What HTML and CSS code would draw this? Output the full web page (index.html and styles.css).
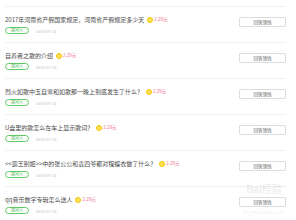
FILE: index.html
```html
<!DOCTYPE html>
<html lang="zh">
<head>
<meta charset="utf-8">
<link rel="stylesheet" href="styles.css">
</head>
<body>
<div class="list">
  <div class="item">
    <div class="main">
      <div class="title">2017年河南省产假国家规定，河南省产假规定多少天<span class="coin"></span><span class="price">2.29元</span></div>
      <div class="meta"><span class="tag">提问人</span><span class="date">2018-07-18</span></div>
    </div>
    <button class="btn">回答领钱</button>
  </div>
  <div class="item">
    <div class="main">
      <div class="title">自养者之歌的介绍<span class="coin"></span><span class="price">2.29元</span></div>
      <div class="meta"><span class="tag">提问人</span><span class="date">2018-07-18</span></div>
    </div>
    <button class="btn">回答领钱</button>
  </div>
  <div class="item">
    <div class="main">
      <div class="title">烈火如歌中玉自寒和如歌那一晚上到底发生了什么？<span class="coin"></span><span class="price">2.29元</span></div>
      <div class="meta"><span class="tag">提问人</span><span class="date">2018-07-18</span></div>
    </div>
    <button class="btn">回答领钱</button>
  </div>
  <div class="item">
    <div class="main">
      <div class="title">U盘里的歌怎么在车上显示歌词？<span class="coin"></span><span class="price">2.29元</span></div>
      <div class="meta"><span class="tag">提问人</span><span class="date">2018-07-18</span></div>
    </div>
    <button class="btn">回答领钱</button>
  </div>
  <div class="item">
    <div class="main">
      <div class="title">&lt;&lt;霸王别姬&gt;&gt;中的张公公和袁四爷都对程蝶衣做了什么？<span class="coin"></span><span class="price">2.29元</span></div>
      <div class="meta"><span class="tag">提问人</span><span class="date">2018-07-18</span></div>
    </div>
    <button class="btn">回答领钱</button>
  </div>
  <div class="item">
    <div class="main">
      <div class="title">qq音乐数字专辑怎么送人<span class="coin"></span><span class="price">2.29元</span></div>
      <div class="meta"><span class="tag">提问人</span><span class="date">2018-07-18</span></div>
    </div>
    <button class="btn">回答领钱</button>
  </div>
</div>
<div class="watermark">
  <div class="wm-logo">Bai<span>经验</span></div>
  <div class="wm-url">jingyan.baidu.com</div>
</div>
</body>
</html>
```

FILE: styles.css
```css
html, body {
  margin: 0;
  padding: 0;
  background: #fff;
  font-family: "Noto Sans CJK SC", "Noto Sans", sans-serif;
}
body {
  width: 296px;
  height: 220px;
  overflow: hidden;
  position: relative;
}
.list {
  margin: 6px 10px 0 5px;
  border-top: 1px solid #f0f0f0;
}
.item {
  height: 36px;
  box-sizing: border-box;
  border-bottom: 1px solid #f0f0f0;
  display: flex;
  justify-content: space-between;
  align-items: flex-start;
  padding-top: 8px;
}
.title {
  font-size: 6px;
  line-height: 9px;
  color: #4a4a4a;
  white-space: nowrap;
  display: flex;
  align-items: center;
}
.coin {
  display: inline-block;
  width: 4px;
  height: 4px;
  border: 1px solid #f5c400;
  border-radius: 50%;
  background: #ffe15a;
  margin-left: 3px;
  margin-right: 1px;
}
.price {
  font-size: 4.5px;
  color: #f0607a;
}
.meta {
  display: flex;
  align-items: center;
  margin-top: 3px;
  gap: 7px;
}
.tag {
  font-size: 4px;
  line-height: 5px;
  color: #3fb54a;
  border: 1px solid #5fc865;
  border-radius: 4px;
  padding: 0 5px;
}
.date {
  font-size: 4px;
  color: #c0c0c0;
}
.btn {
  margin: 2px 0 0;
  width: 47px;
  height: 10px;
  padding: 0;
  background: #fff;
  border: 1px solid #dcdcdc;
  border-radius: 1px;
  font-family: inherit;
  font-size: 4.5px;
  line-height: 8px;
  color: #555;
}
.watermark {
  position: absolute;
  left: 238px;
  top: 183px;
  width: 52px;
  height: 32px;
  color: rgba(150, 150, 150, 0.18);
  text-align: center;
  display: flex;
  flex-direction: column;
  justify-content: space-between;
}
.wm-logo {
  font-size: 10px;
  line-height: 11px;
  font-family: "Liberation Sans", sans-serif;
  font-weight: bold;
}
.wm-logo span {
  font-family: "Noto Sans CJK SC", sans-serif;
}
.wm-url {
  font-size: 5px;
  line-height: 6px;
}
```
